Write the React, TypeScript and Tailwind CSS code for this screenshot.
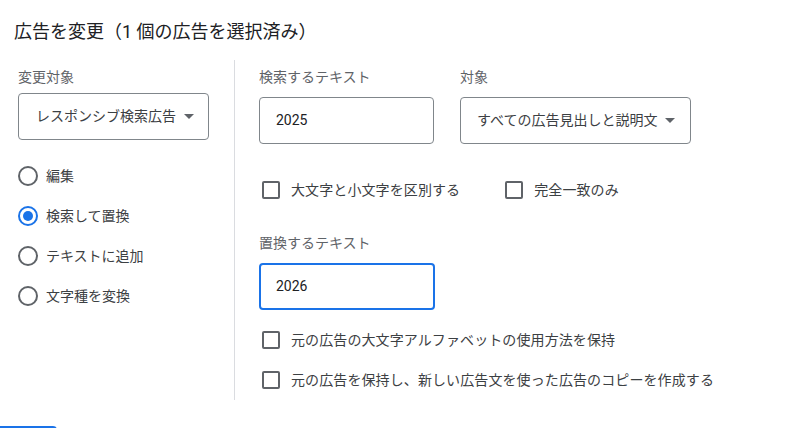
function Radio({ label, checked = false }: { label: string; checked?: boolean }) {
  return (
    <div className="flex h-[40px] items-center gap-[8px]">
      <span
        className={
          checked
            ? 'flex h-[20px] w-[20px] items-center justify-center rounded-full border-2 border-[#1a73e8]'
            : 'flex h-[20px] w-[20px] items-center justify-center rounded-full border-2 border-[#5f6368]'
        }
      >
        {checked && <span className="h-[10px] w-[10px] rounded-full bg-[#1a73e8]" />}
      </span>
      <span className="text-[14px] text-[#3c4043]">{label}</span>
    </div>
  );
}

function Checkbox({ label }: { label: string }) {
  return (
    <div className="flex h-[24px] items-center gap-[11px] pl-[3px]">
      <span className="h-[18px] w-[18px] rounded-[2px] border-2 border-[#5f6368]" />
      <span className="text-[14px] tracking-[0.1px] text-[#3c4043]">{label}</span>
    </div>
  );
}

function Arrow() {
  return (
    <svg width="10" height="5" viewBox="0 0 10 5" className="shrink-0">
      <path d="M0 0 L10 0 L5 5 Z" fill="#5f6368" />
    </svg>
  );
}

export default function App() {
  return (
    <div className="h-[428px] w-[787px] overflow-hidden bg-white font-['Roboto','Noto_Sans_CJK_JP',sans-serif]">
      <div className="pl-[14px] pt-[20px]">
        <h1 className="h-[24px] text-[18px] leading-[24px] text-[#202124]">広告を変更（1 個の広告を選択済み）</h1>
      </div>

      <div className="mt-[16px] flex">
        {/* left column */}
        <div className="w-[234px] shrink-0 pl-[18px] pt-[7px]">
          <div className="h-[20px] text-[14px] leading-[20px] text-[#5f6368]">変更対象</div>
          <div className="mt-[6px] flex h-[47px] w-[191px] items-center gap-[8px] rounded-[4px] border border-[#80868b] pl-[17px]">
            <span className="text-[14px] text-[#3c4043]">レスポンシブ検索広告</span>
            <Arrow />
          </div>
          <div className="mt-[16px]">
            <Radio label="編集" />
            <Radio label="検索して置換" checked />
            <Radio label="テキストに追加" />
            <Radio label="文字種を変換" />
          </div>
        </div>

        {/* right column */}
        <div className="border-l border-[#dadce0] pb-[8px] pl-[24px] pt-[7px]">
          <div className="flex gap-[26px]">
            <div>
              <div className="h-[20px] text-[14px] leading-[20px] text-[#5f6368]">検索するテキスト</div>
              <div className="mt-[10px] flex h-[47px] w-[175px] items-center rounded-[4px] border border-[#80868b] pl-[16px] text-[14px] text-[#202124]">
                2025
              </div>
            </div>
            <div>
              <div className="h-[20px] text-[14px] leading-[20px] text-[#5f6368]">対象</div>
              <div className="mt-[10px] flex h-[47px] w-[231px] items-center gap-[8px] rounded-[4px] border border-[#80868b] pl-[16px]">
                <span className="text-[14px] text-[#3c4043]">すべての広告見出しと説明文</span>
                <Arrow />
              </div>
            </div>
          </div>

          <div className="mt-[34px] flex gap-[42px]">
            <Checkbox label="大文字と小文字を区別する" />
            <Checkbox label="完全一致のみ" />
          </div>

          <div className="mt-[31px] h-[20px] text-[14px] leading-[20px] text-[#5f6368]">置換するテキスト</div>
          <div className="mt-[10px] flex h-[47px] w-[176px] items-center rounded-[4px] border-2 border-[#1a73e8] pl-[15px] text-[14px] text-[#202124]">
            2026
          </div>

          <div className="mt-[18px]">
            <Checkbox label="元の広告の大文字アルファベットの使用方法を保持" />
          </div>
          <div className="mt-[16px]">
            <Checkbox label="元の広告を保持し、新しい広告文を使った広告のコピーを作成する" />
          </div>
        </div>
      </div>

      <div className="mt-[26px] h-[20px] w-[57px] rounded-r-[4px] bg-[#1a73e8]" />
    </div>
  );
}
